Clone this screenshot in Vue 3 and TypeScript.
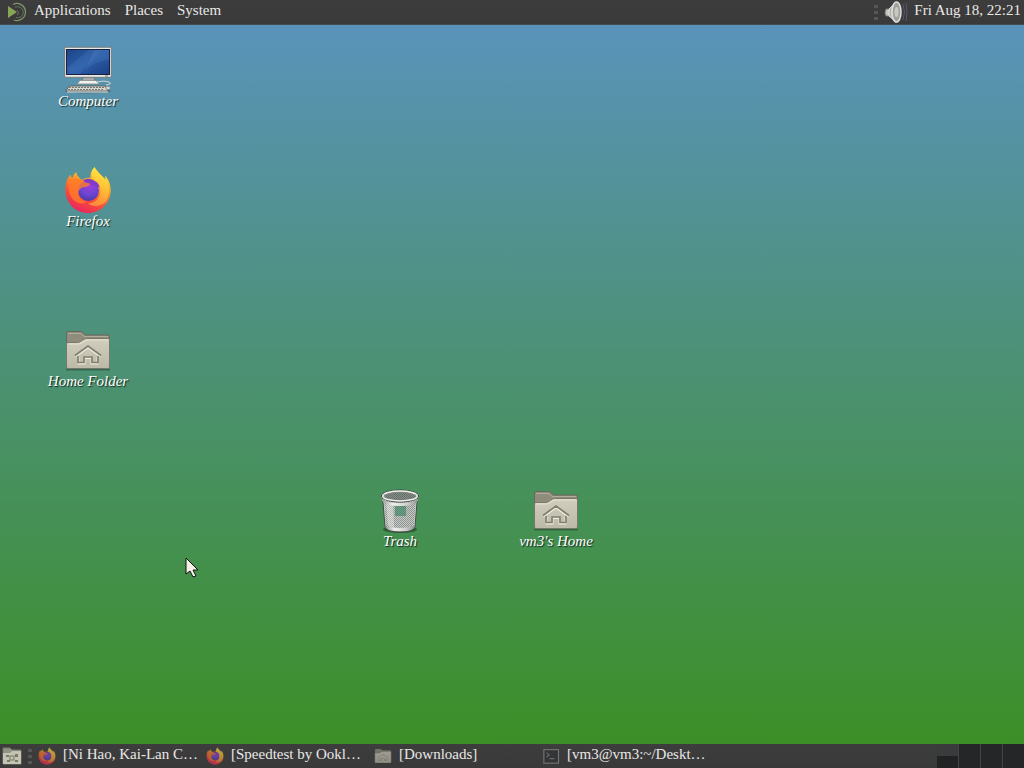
<script setup lang="ts">
import { ref } from 'vue'

type IconKind = 'computer' | 'firefox' | 'folder' | 'trash' | 'terminal'

interface Launcher {
  label: string
  icon: IconKind
  x: number
  y: number
}

interface Task {
  title: string
  icon: IconKind
}

const menus: string[] = ['Applications', 'Places', 'System']

const launchers: Launcher[] = [
  { label: 'Computer', icon: 'computer', x: 88, y: 21 },
  { label: 'Firefox', icon: 'firefox', x: 88, y: 141 },
  { label: 'Home Folder', icon: 'folder', x: 88, y: 301 },
  { label: 'Trash', icon: 'trash', x: 400, y: 461 },
  { label: "vm3's Home", icon: 'folder', x: 556, y: 461 },
]

const tasks: Task[] = [
  { title: '[Ni Hao, Kai-Lan C…', icon: 'firefox' },
  { title: '[Speedtest by Ookl…', icon: 'firefox' },
  { title: '[Downloads]', icon: 'folder' },
  { title: '[vm3@vm3:~/Deskt…', icon: 'terminal' },
]

const workspaces: number[] = [1, 2, 3, 4]
const activeWorkspace = ref(1)
</script>

<template>
  <div class="screen">
    <svg class="defs" width="0" height="0" aria-hidden="true">
      <defs>
        <linearGradient id="g-screen" x1="0" y1="0" x2="1" y2="1">
          <stop offset="0" stop-color="#1d4588" /><stop offset=".5" stop-color="#2b5da8" /><stop offset="1" stop-color="#1c4084" />
        </linearGradient>
        <linearGradient id="g-fox" x1=".75" y1="0" x2=".3" y2="1">
          <stop offset="0" stop-color="#fff04a" /><stop offset=".35" stop-color="#ffa72a" /><stop offset=".65" stop-color="#fb5236" /><stop offset="1" stop-color="#e82260" />
        </linearGradient>
        <radialGradient id="g-globe" cx=".55" cy=".25" r=".8">
          <stop offset="0" stop-color="#a33de0" /><stop offset=".6" stop-color="#6a45cf" /><stop offset="1" stop-color="#48379f" />
        </radialGradient>
        <linearGradient id="g-folder" x1="0" y1="0" x2="0" y2="1">
          <stop offset="0" stop-color="#d2cebe" /><stop offset="1" stop-color="#bdb9a9" />
        </linearGradient>
        <linearGradient id="g-metal" x1="0" y1="0" x2="1" y2="0">
          <stop offset="0" stop-color="#90928e" /><stop offset=".3" stop-color="#f0f0ee" /><stop offset=".7" stop-color="#cfd0cd" /><stop offset="1" stop-color="#8b8d89" />
        </linearGradient>
        <pattern id="p-mesh" width="2" height="2" patternUnits="userSpaceOnUse">
          <rect width="1" height="1" fill="#666f69" /><rect x="1" y="1" width="1" height="1" fill="#666f69" />
        </pattern>

        <symbol id="icon-computer" viewBox="0 0 48 48">
          <ellipse cx="24" cy="45" rx="23" ry="2.500" fill="#000" opacity=".2" />
          <path d="M19 31h11l1 5H18z" fill="#a8aaa9" stroke="#737573" />
          <path d="M16 34.500h16l3 3.500H13z" fill="#f1f1ef" stroke="#898b89" stroke-width=".8" />
          <rect x=".7" y="1.200" width="46.600" height="30.100" rx="1.200" fill="#e9e9e7" stroke="#777b7c" />
          <rect x="2.500" y="3.500" width="43" height="25" fill="url(#g-screen)" stroke="#15213f" />
          <path d="M3 22L25 4h13L16 28h-9z" fill="#5d8fd0" opacity=".18" />
          <path d="M20 28Q27 15 45 14V4H30z" fill="#6899d8" opacity=".16" />
          <rect x="41" y="29.500" width="3" height="1" fill="#737573" />
          <path d="M33 36q7-2 12 0q4 2-3 3" fill="none" stroke="#d6d8d5" />
          <path d="M5 40h36l3 5H2z" fill="#d6d6d2" stroke="#65645f" />
          <path d="M5 41.500H40M4 43.500H40" stroke="#77766f" stroke-dasharray="2 1" />
          <path d="M3 46h41" stroke="#eee9df" />
          <ellipse cx="44" cy="42" rx="2.400" ry="1.400" fill="#e8e6e1" stroke="#77766f" stroke-width=".6" />
        </symbol>

        <symbol id="icon-firefox" viewBox="0 0 48 48">
          <path d="M30.500 1c-3 3-4.500 7-4 11-3-.6-6 .3-8 2-3-1.300-5.800-4.500-6.300-8-2 1.500-3.200 4-3.700 6-1.200-.6-1.800-2-2-3.500C3 12 1.500 17.500 1.500 24 1.500 37 11.500 47 24 47s22.700-10 22.700-22.500c0-6.500-2.300-11.500-5.700-15l.5 5C38.500 9 34 7 30.500 1z" fill="url(#g-fox)" />
          <circle cx="24.500" cy="24.500" r="10.500" fill="url(#g-globe)" />
          <path d="M19 14.500c3.500-2.500 8.500-2.300 12 .8 3 1 5 4 4.700 6.700-2-2.500-4.500-3-6.700-2.800-3-.2-4-2.200-10-4.700z" fill="#823bc8" />
          <path d="M5 12.500c1 .8 2 1.300 3.400.8 3-1.300 7-.8 10 1 1.700 2 4.500 2.700 7.600 3.200-.2 2.400-2.800 3.300-6.500 3.800-3.500.8-5 3-5.300 6.200.8 4.500 4.300 7.500 8.500 8.500-6 4-15.200-1-17.200-9C4.500 23 3.500 17 5 12.500z" fill="#ff7a28" opacity=".8" />
          <path d="M30.500 1c-3 4-3.500 9 .5 13.500 5.500 5 7.500 12 3.800 17-2.300 4-7 6-11 5.800 6 4.200 13.200 3 17.700-1.300 5.500-7 4-18.500-.5-24C35 9 31.500 6 30.500 1z" fill="#ffe043" opacity=".45" />
        </symbol>

        <symbol id="icon-folder" viewBox="0 0 48 48">
          <path d="M2 43.500h44" stroke="#000" stroke-width="2" opacity=".28" />
          <path d="M2.500 41V7q0-1.500 1.500-1.500h12.500q1.500 0 2.500 1.200L21.500 9H44q1.500 0 1.500 1.500V41z" fill="#8f8c7b" stroke="#66695b" />
          <path d="M4 7.500h13l3 3h24" fill="none" stroke="#b0ad9c" />
          <path d="M2.500 41V18q0-1.500 1.500-1.500h9.500q1.500 0 3-1l3.500-2.200q1-.8 2.500-.8H44q1.500 0 1.500 1.500v27q0 1.500-1.500 1.500H4q-1.500 0-1.500-1.500z" fill="url(#g-folder)" stroke="#77796a" />
          <path d="M3.500 18h10.500q2 0 3.500-1l3.500-2.300q1-.7 2.500-.7H44.500" fill="none" stroke="#e8e4d5" />
          <path d="M11.500 30.500L24 21.500l12.500 9M14.500 31v6.500h6V32h7v5.500h6V31" fill="none" stroke="#efebdd" stroke-width="2" />
          <path d="M11 29.500L24 20l13 9.500M14 30v6.500h6V31h8v5.500h6V30" fill="none" stroke="#7e7f70" stroke-width="1.700" />
        </symbol>

        <symbol id="icon-trash" viewBox="0 0 48 48">
          <ellipse cx="24" cy="43.500" rx="17" ry="3.500" fill="#000" opacity=".35" />
          <path d="M6.500 10l2.500 31q2 5 15 5t15-5l2.500-31z" fill="#c7cbc7" stroke="#444c46" />
          <path d="M8 11l2 28q4 4 14 4t14-4l2-28z" fill="url(#p-mesh)" opacity=".6" />
          <path d="M19 17h11v13H19z" fill="#31805a" opacity=".6" />
          <path d="M10 17l2 23 6 2-1-24z" fill="#fff" opacity=".35" />
          <path d="M9.500 39q4 3 14.500 3t14.500-3v2q-3 4-14.500 4T9.500 41z" fill="url(#g-metal)" />
          <ellipse cx="24" cy="10" rx="18.500" ry="6" fill="#858d86" stroke="#353d37" />
          <ellipse cx="24" cy="10.500" rx="15" ry="4" fill="url(#p-mesh)" />
          <path d="M5.500 10q0 7 18.500 7t18.500-7v3q-1 7-18.500 7T5.500 13z" fill="url(#g-metal)" />
          <ellipse cx="24" cy="10" rx="17.300" ry="5" fill="none" stroke="#eff0ed" stroke-width="1.500" />
        </symbol>

        <symbol id="icon-terminal" viewBox="0 0 48 48">
          <rect x="5" y="7" width="39" height="36" fill="#303235" stroke="#929392" stroke-width="3" />
          <path d="M12 15l7 6-7 6M20 31h13" fill="none" stroke="#858786" stroke-width="3" />
        </symbol>
      </defs>
    </svg>

    <header class="panel">
      <svg class="logo" viewBox="0 0 20 20" aria-hidden="true">
        <path d="M1 4v12l9-6z" fill="#87a556" />
        <path d="M6 2.500a8.500 8.500 0 1 1 1 15.500" fill="none" stroke="#80966a" stroke-width="1.200" />
        <path d="M8 5.500a5.500 5.500 0 1 1 1 10" fill="none" stroke="#65765a" />
        <path d="M10 8.500a2.500 2.500 0 0 1 0 4.500" fill="none" stroke="#65765a" />
      </svg>
      <nav class="menus" aria-label="Main menu">
        <button v-for="menu in menus" :key="menu" type="button" class="menu">{{ menu }}</button>
      </nav>
      <div class="status">
        <span class="grip"><i></i><i></i><i></i></span>
        <button type="button" class="volume" aria-label="Volume">
          <svg viewBox="0 0 24 24" aria-hidden="true">
            <path d="M2 9h5v7H2q-2-3 0-7z" fill="#c5c5c2" stroke="#777775" />
            <path d="M5 9l7-7q6 9 0 20l-7-6z" fill="#b6b6b3" stroke="#ddddda" />
            <ellipse cx="12.500" cy="12" rx="4.500" ry="10" fill="#a09f9b" stroke="#deded9" stroke-width="1.500" />
            <ellipse cx="12.500" cy="12" rx="2" ry="5" fill="#c9c9c4" />
            <path d="M19 4q3 8 0 16M22 3q2 9 0 18" fill="none" stroke="#565672" />
          </svg>
        </button>
        <button type="button" class="clock">Fri Aug 18, 22:21</button>
      </div>
    </header>

    <main class="desktop">
      <button
        v-for="item in launchers"
        :key="item.label"
        type="button"
        class="launcher"
        :style="{ left: item.x + 'px', top: item.y + 'px' }"
      >
        <svg class="launcher-icon" aria-hidden="true"><use :href="'#icon-' + item.icon" /></svg>
        <span>{{ item.label }}</span>
      </button>
      <svg class="pointer" viewBox="0 0 14 22" aria-hidden="true">
        <path d="M1 1v16l4-3 3 6 3-1-3-6h5z" fill="#f5f1e6" stroke="#111" />
      </svg>
    </main>

    <footer class="panel">
      <button type="button" class="show-desktop" aria-label="Show desktop">
        <svg viewBox="0 0 20 20" aria-hidden="true">
          <path d="M1 18V2h7l2 2h9v14z" fill="#929385" stroke="#777969" />
          <path d="M1 18V7h7l2-2h9v13z" fill="#c4c3b4" />
          <path d="M4 9h3v2H4zM13 8h3v3h-3zM5 14h3v2H5zM13 14h3v2h-3z" fill="#777969" />
          <rect x="8" y="10" width="4" height="4" fill="none" stroke="#777969" />
        </svg>
      </button>
      <span class="grip"><i></i><i></i><i></i></span>
      <nav class="tasks" aria-label="Windows">
        <button v-for="task in tasks" :key="task.title" type="button" class="task">
          <svg class="task-icon" aria-hidden="true"><use :href="'#icon-' + task.icon" /></svg>
          <span>{{ task.title }}</span>
        </button>
      </nav>
      <div class="workspaces" role="group" aria-label="Workspaces">
        <button
          v-for="n in workspaces"
          :key="n"
          type="button"
          class="workspace"
          :class="{ active: n === activeWorkspace }"
          :aria-label="'Workspace ' + n"
          @click="activeWorkspace = n"
        >
          <span v-if="n === 1" class="mini-window"></span>
        </button>
      </div>
    </footer>
  </div>
</template>

<style>
body {
  margin: 0;
}
</style>

<style scoped>
.screen {
  display: flex;
  flex-direction: column;
  min-height: 100vh;
  background: linear-gradient(#5b93bf, #3b8f22);
  font-family: "Liberation Serif", serif;
  font-size: 15px;
  line-height: 20px;
  overflow: hidden;
}

.defs {
  position: absolute;
}

button {
  margin: 0;
  padding: 0;
  border: 0;
  background: none;
  color: inherit;
  font: inherit;
  cursor: default;
}

.panel {
  display: flex;
  align-items: center;
  height: 24px;
  flex: none;
  background: linear-gradient(#3e3d3e, #3a393a);
  color: #e8e8e6;
}

header.panel {
  border-bottom: 1px solid #454b50;
}

.logo {
  width: 20px;
  height: 20px;
  margin-left: 7px;
}

.menus {
  display: flex;
}

.menu {
  padding: 0 7px 4px;
}

.status {
  display: flex;
  align-items: center;
  margin-left: auto;
}

.grip {
  display: flex;
  flex-direction: column;
  gap: 3px;
  width: 4px;
}

.grip i {
  height: 3px;
  background: #555655;
}

.volume {
  width: 24px;
  height: 24px;
  margin: 0 6px;
}

.volume svg {
  display: block;
}

.clock {
  padding: 0 3px 4px 0;
}

.desktop {
  position: relative;
  flex: 1;
}

.launcher {
  position: absolute;
  display: flex;
  flex-direction: column;
  align-items: center;
  width: 120px;
  margin-left: -60px;
  color: #fff;
  font-style: italic;
  line-height: 14px;
  text-shadow: 1px 1px 1px #10251c;
}

.launcher-icon {
  width: 48px;
  height: 48px;
}

.pointer {
  position: absolute;
  left: 185px;
  top: 532px;
  width: 14px;
  height: 22px;
}

.show-desktop {
  width: 20px;
  height: 20px;
  margin: 0 6px 0 2px;
}

.show-desktop svg {
  display: block;
}

.tasks {
  display: flex;
  flex: 1;
  min-width: 0;
  margin-left: 6px;
}

.task {
  display: flex;
  align-items: center;
  gap: 7px;
  width: 168px;
  white-space: nowrap;
}

.task span {
  padding-bottom: 4px;
}

.task-icon {
  width: 18px;
  height: 18px;
  opacity: 0.65;
}

.workspaces {
  display: flex;
  gap: 1px;
  align-self: stretch;
  background: #434445;
}

.workspace {
  display: flex;
  align-items: flex-end;
  width: 21px;
  background: #242628;
}

.workspace.active {
  background: #393b3c;
}

.mini-window {
  width: 100%;
  height: 12px;
  background: #202224;
}
</style>
